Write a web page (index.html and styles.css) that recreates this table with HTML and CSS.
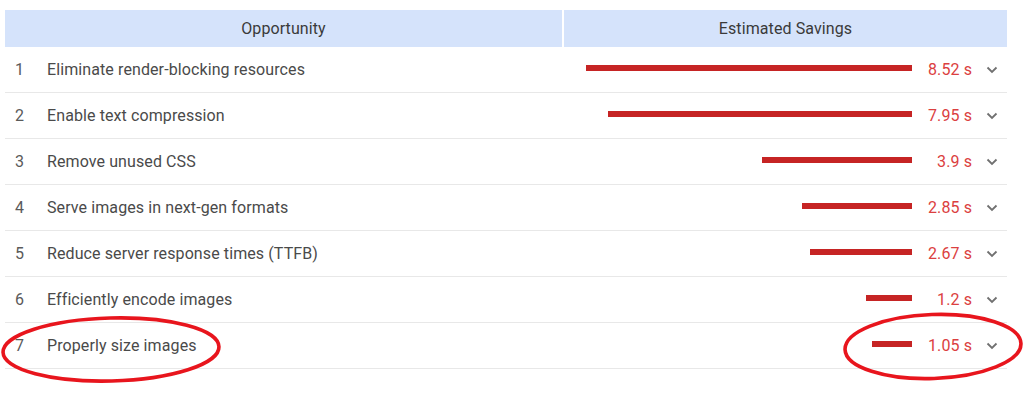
FILE: index.html
```html
<!DOCTYPE html>
<html lang="en">
<head>
<meta charset="utf-8">
<title>Opportunities</title>
<link rel="stylesheet" href="styles.css">
</head>
<body>
<div class="page">
  <div class="table">
    <div class="head">
      <div class="th">Opportunity</div>
      <div class="th">Estimated Savings</div>
    </div>
    <div class="row">
      <span class="num">1</span><span class="label">Eliminate render-blocking resources</span>
      <span class="barcell"><span class="bar" style="width:326px"></span></span>
      <span class="val">8.52 s</span><span class="chev"><svg viewBox="0 0 12 8" width="12" height="8"><path d="M1.5 1.5 6 6 10.5 1.5"/></svg></span>
    </div>
    <div class="row">
      <span class="num">2</span><span class="label">Enable text compression</span>
      <span class="barcell"><span class="bar" style="width:304px"></span></span>
      <span class="val">7.95 s</span><span class="chev"><svg viewBox="0 0 12 8" width="12" height="8"><path d="M1.5 1.5 6 6 10.5 1.5"/></svg></span>
    </div>
    <div class="row">
      <span class="num">3</span><span class="label">Remove unused CSS</span>
      <span class="barcell"><span class="bar" style="width:150px"></span></span>
      <span class="val">3.9 s</span><span class="chev"><svg viewBox="0 0 12 8" width="12" height="8"><path d="M1.5 1.5 6 6 10.5 1.5"/></svg></span>
    </div>
    <div class="row">
      <span class="num">4</span><span class="label">Serve images in next-gen formats</span>
      <span class="barcell"><span class="bar" style="width:110px"></span></span>
      <span class="val">2.85 s</span><span class="chev"><svg viewBox="0 0 12 8" width="12" height="8"><path d="M1.5 1.5 6 6 10.5 1.5"/></svg></span>
    </div>
    <div class="row">
      <span class="num">5</span><span class="label">Reduce server response times (TTFB)</span>
      <span class="barcell"><span class="bar" style="width:102px"></span></span>
      <span class="val">2.67 s</span><span class="chev"><svg viewBox="0 0 12 8" width="12" height="8"><path d="M1.5 1.5 6 6 10.5 1.5"/></svg></span>
    </div>
    <div class="row">
      <span class="num">6</span><span class="label">Efficiently encode images</span>
      <span class="barcell"><span class="bar" style="width:46px"></span></span>
      <span class="val">1.2 s</span><span class="chev"><svg viewBox="0 0 12 8" width="12" height="8"><path d="M1.5 1.5 6 6 10.5 1.5"/></svg></span>
    </div>
    <div class="row">
      <span class="num">7</span><span class="label">Properly size images</span>
      <span class="barcell"><span class="bar" style="width:40px"></span></span>
      <span class="val">1.05 s</span><span class="chev"><svg viewBox="0 0 12 8" width="12" height="8"><path d="M1.5 1.5 6 6 10.5 1.5"/></svg></span>
    </div>
  </div>
  <svg class="marks" width="1024" height="402" viewBox="0 0 1024 402">
    <ellipse cx="111" cy="349.5" rx="108" ry="31.5" transform="rotate(-1.5 111 349.5)"/>
    <ellipse cx="933" cy="346.5" rx="88" ry="32" transform="rotate(-2 933 346.5)"/>
  </svg>
</div>
</body>
</html>
```

FILE: styles.css
```css
html, body {
  margin: 0;
  padding: 0;
  background: #ffffff;
}

.page {
  position: relative;
  width: 1024px;
  height: 402px;
  overflow: hidden;
  font-family: Roboto, "Liberation Sans", Arial, sans-serif;
}

.table {
  margin: 10px 0 0 5px;
  width: 1002px;
}

.head {
  display: grid;
  grid-template-columns: 557px 1fr;
  column-gap: 2px;
  height: 37px;
}

.th {
  background: #d5e3fb;
  color: #3a3a3a;
  font-size: 16px;
  letter-spacing: 0.1px;
  display: flex;
  align-items: center;
  justify-content: center;
}

.row {
  display: grid;
  grid-template-columns: 42px 1fr 330px 60px 35px;
  align-items: center;
  height: 45px;
  border-bottom: 1px solid #e8e8e8;
  font-size: 16px;
  letter-spacing: 0.1px;
}

.row:first-of-type {
  height: 44px;
}

.num {
  padding-left: 10px;
  color: #5a5a5a;
}

.label {
  color: #4a4a4a;
}

.barcell {
  display: flex;
  justify-content: flex-end;
  align-items: center;
  padding-bottom: 3px;
}

.bar {
  display: block;
  height: 6px;
  background: #c62424;
}

.val {
  text-align: right;
  color: #db4040;
}

.chev {
  display: flex;
  justify-content: flex-start;
  padding-left: 14px;
}

.chev svg {
  display: block;
  fill: none;
  stroke: #707070;
  stroke-width: 1.8;
}

.marks {
  position: absolute;
  left: 0;
  top: 0;
  pointer-events: none;
}

.marks ellipse {
  fill: none;
  stroke: #e8151d;
  stroke-width: 3.6;
}
```
